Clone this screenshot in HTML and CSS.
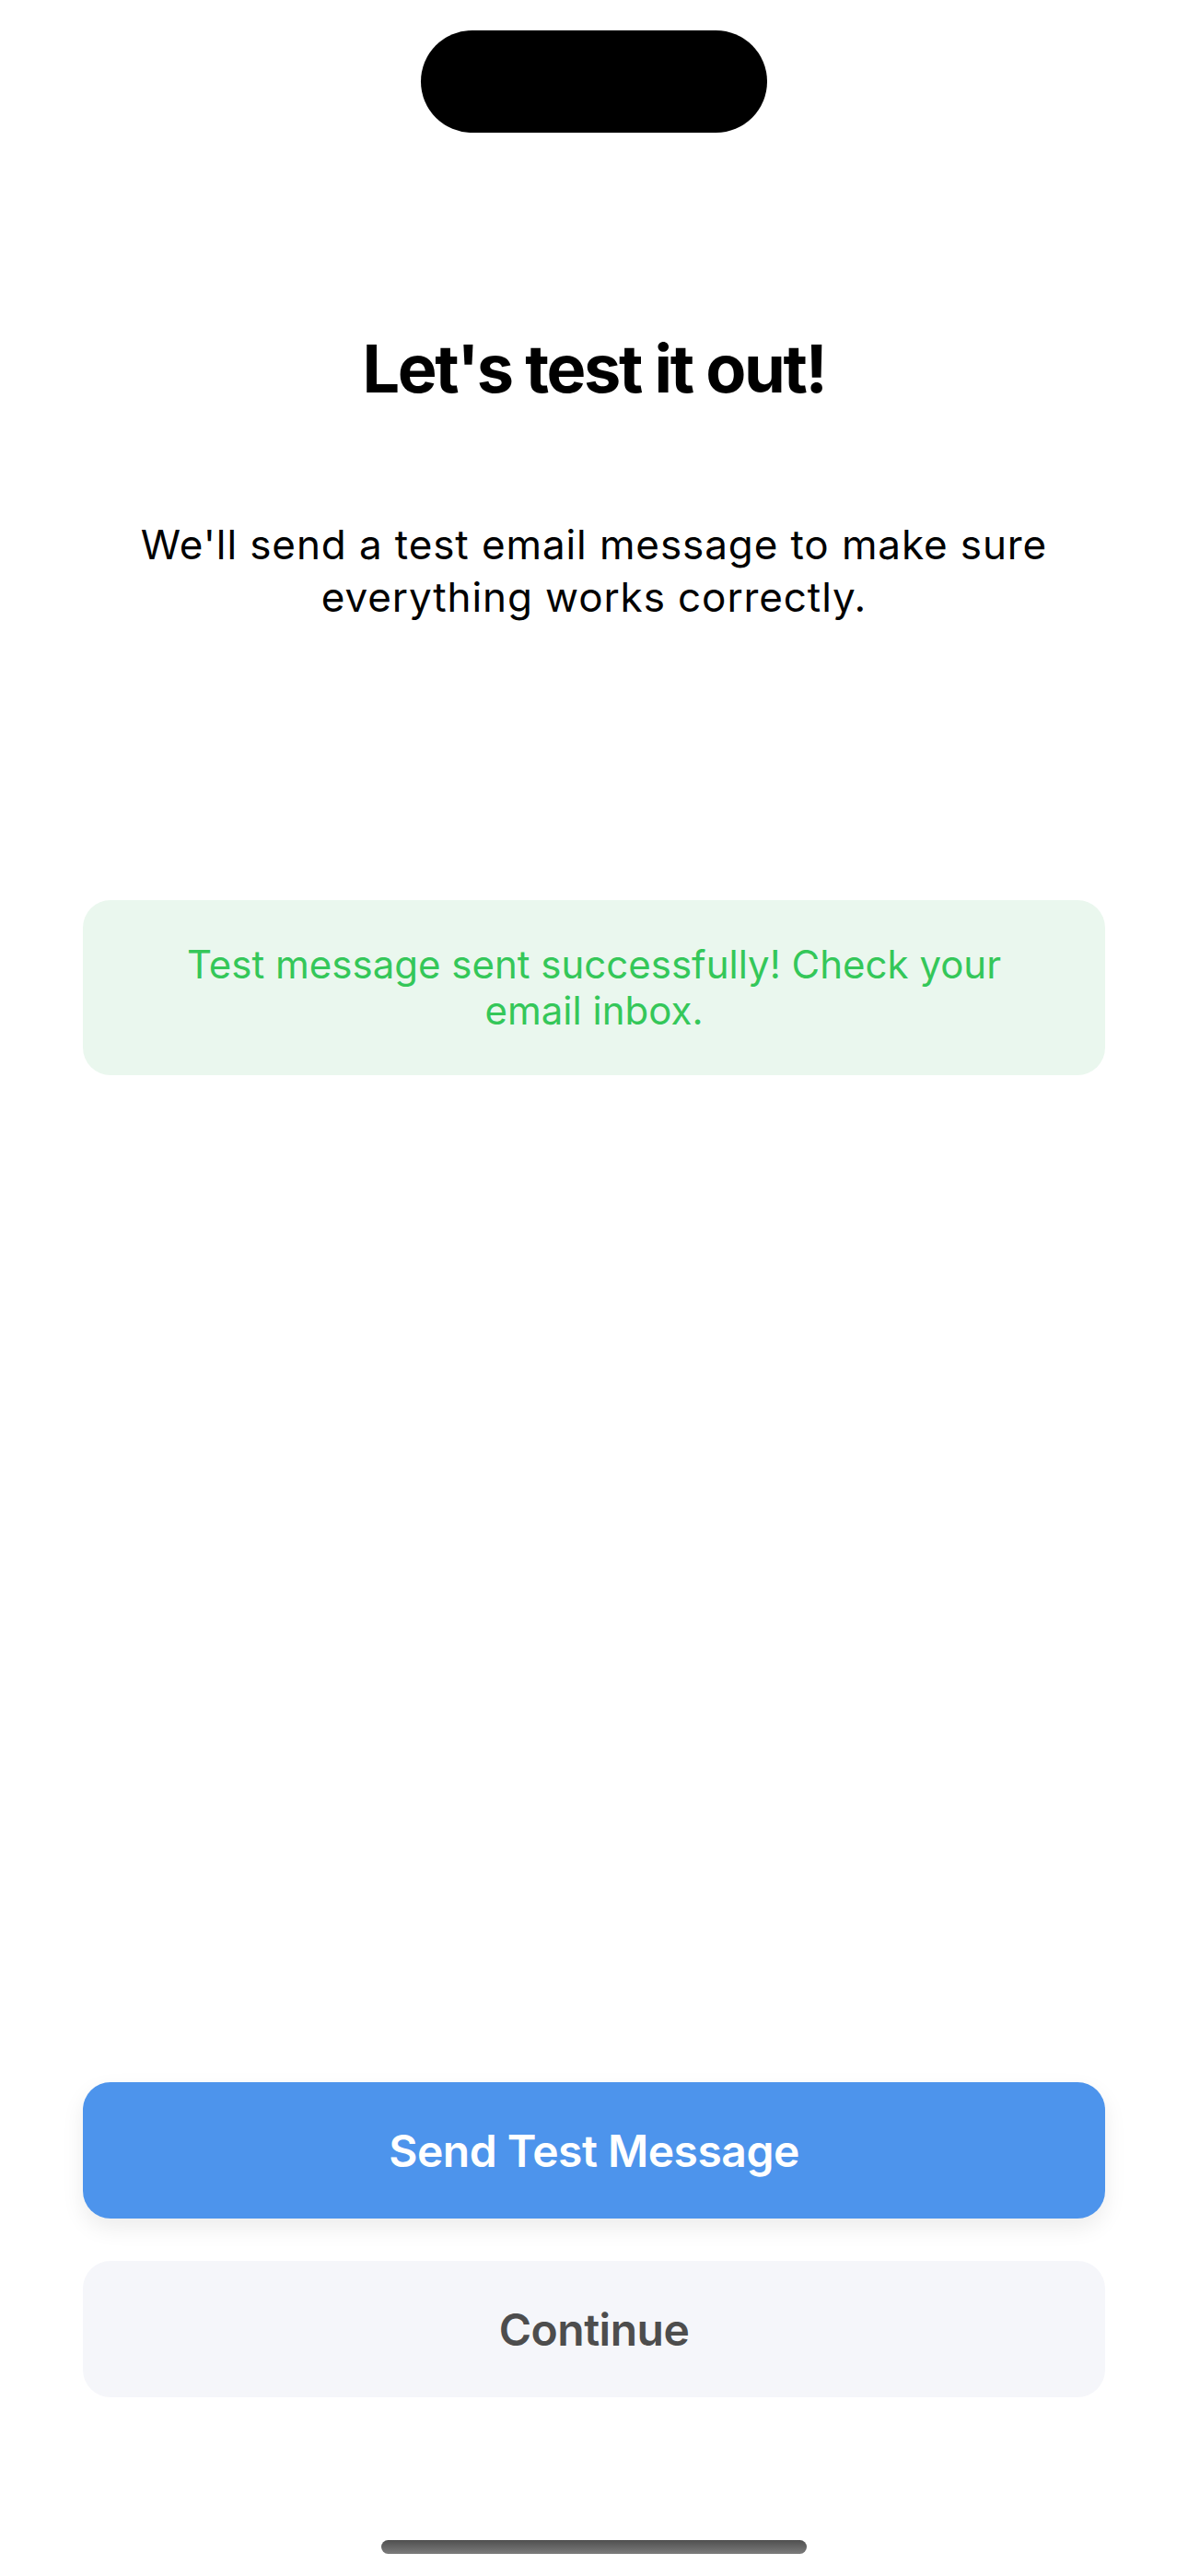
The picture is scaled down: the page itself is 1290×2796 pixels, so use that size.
FILE: index.html
```html
<!DOCTYPE html>
<html lang="en">
<head>
<meta charset="utf-8">
<title>Let's test it out!</title>
<link rel="stylesheet" href="styles.css">
</head>
<body>
<div class="screen">
  <div class="top-bar">
    <div class="island"></div>
  </div>

  <main class="content">
    <h1 class="title">Let's test it out!</h1>
    <p class="lead">We'll send a test email message to make sure everything works correctly.</p>
    <div class="notice notice-success">Test message sent successfully! Check your email inbox.</div>
  </main>

  <div class="actions">
    <button class="btn btn-primary" type="button">Send Test Message</button>
    <button class="btn btn-secondary" type="button">Continue</button>
  </div>

  <div class="home-bar">
    <div class="home-indicator"></div>
  </div>
</div>
</body>
</html>
```

FILE: styles.css
```css
* {
  box-sizing: border-box;
}

html,
body {
  margin: 0;
  padding: 0;
  background: #ffffff;
}

body {
  font-family: Inter, "Noto Sans", "Liberation Sans", sans-serif;
  color: #000000;
}

.screen {
  width: 1290px;
  min-height: 2796px;
  display: flex;
  flex-direction: column;
}

/* status area with the camera cut-out */
.top-bar {
  display: flex;
  justify-content: center;
  padding-top: 33px;
}

.island {
  width: 376px;
  height: 111px;
  border-radius: 56px;
  background: #000000;
}

.content {
  display: flex;
  flex-direction: column;
  align-items: stretch;
  padding: 0 90px;
}

.title {
  margin: 213px 0 0;
  font-size: 72px;
  line-height: 86px;
  font-weight: 700;
  text-align: center;
  letter-spacing: -2.4px;
}

.lead {
  margin: 120px 0 0;
  font-size: 44px;
  line-height: 57px;
  font-weight: 400;
  text-align: center;
  letter-spacing: 0.9px;
}

.notice {
  margin-top: 300px;
  border-radius: 30px;
  padding: 45px 72px;
  font-size: 42px;
  line-height: 50px;
  text-align: center;
}

.notice-success {
  background: #eaf7ee;
  color: #34c759;
}

.actions {
  margin-top: auto;
  display: flex;
  flex-direction: column;
  gap: 46px;
  padding: 0 90px;
}

.btn {
  height: 148px;
  border: none;
  border-radius: 30px;
  font-family: inherit;
  font-size: 48px;
  font-weight: 600;
  letter-spacing: -0.5px;
  cursor: pointer;
}

.btn-primary {
  background: #4d94ec;
  color: #ffffff;
  box-shadow: 0 10px 24px rgba(0, 0, 0, 0.08);
}

.btn-secondary {
  background: #f5f6fa;
  color: #4d4d4d;
}

.home-bar {
  display: flex;
  justify-content: center;
  padding: 155px 0 24px;
}

.home-indicator {
  width: 462px;
  height: 15px;
  border-radius: 8px;
  background: linear-gradient(180deg, #4f4f4f 0%, #7c7c7c 100%);
}
```
